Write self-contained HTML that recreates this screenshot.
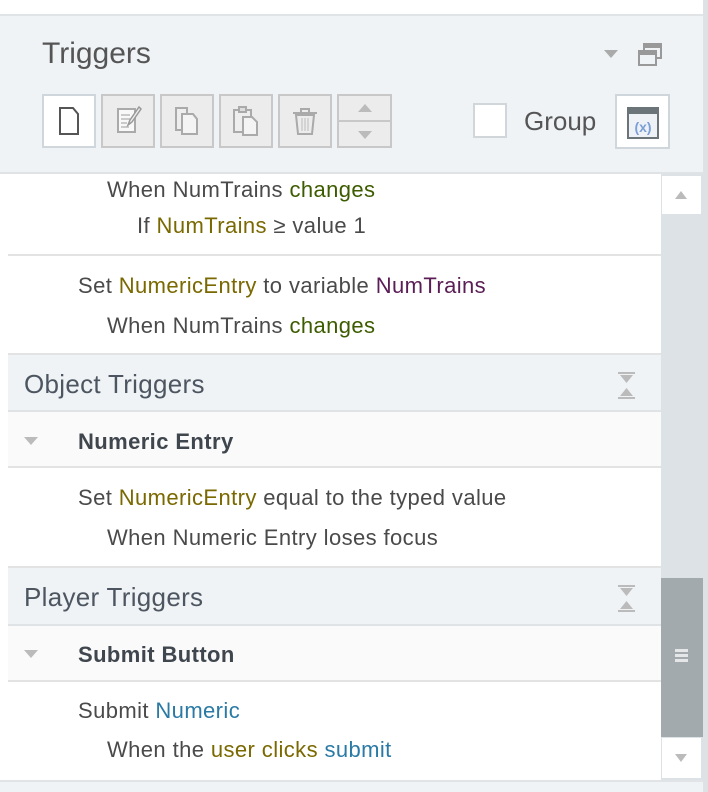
<!DOCTYPE html>
<html><head><meta charset="utf-8"><style>
*{margin:0;padding:0;box-sizing:border-box}
body{width:708px;height:792px;background:#fff;font-family:"Liberation Sans",sans-serif;position:relative;overflow:hidden;color:#4a4a4a}
.a{position:absolute}
.t{position:absolute;font-size:22px;white-space:nowrap;letter-spacing:0.4px}
.g{color:#7a6800}.gr{color:#3d5c00}.p{color:#5a1d55}.b{color:#2a7aa5}
.btn{position:absolute;top:94px;width:54px;height:54px;border:2px solid #c8c8c8;background:#ececec}
.hdr{position:absolute;left:8px;width:653px;background:#eff3f6;border-bottom:2px solid #dfe3e6}
.sub{position:absolute;left:8px;width:653px;background:#fafafa;border-bottom:2px solid #e3e3e3}
.line{position:absolute;left:8px;width:653px;height:2px;background:#e3e3e3}
.h{font-size:26px;color:#4d5660;letter-spacing:0.3px}
</style></head><body>
<div class="a" style="left:0;top:14px;width:708px;height:2px;background:#e1e4e7"></div>
<div class="a" style="left:0;top:16px;width:703px;height:156px;background:#eff3f6"></div>
<div class="a" style="left:703px;top:0;width:5px;height:792px;background:#dfe2e5"></div>
<div class="a" style="left:0;top:172px;width:703px;height:2px;background:#dfe3e6"></div>
<div class="t" style="left:42px;top:37px;font-size:30px;color:#555;letter-spacing:0">Triggers</div>
<div class="a" style="left:604px;top:50px;width:0;height:0;border-left:7px solid transparent;border-right:7px solid transparent;border-top:8px solid #aaa"></div>
<svg class="a" style="left:638px;top:42px" width="26" height="26"><rect x="6" y="2" width="17" height="14" fill="none" stroke="#999" stroke-width="2"/><rect x="6" y="2" width="17" height="4" fill="#999"/><rect x="1" y="9" width="17" height="14" fill="#eff3f6" stroke="#999" stroke-width="2"/><rect x="1" y="9" width="17" height="4" fill="#999"/></svg>
<div class="btn" style="left:42px;background:#fff;border-color:#cfd6dc"><svg width="50" height="50"><path d="M16 12h13l5 6v20h-18z" fill="none" stroke="#555" stroke-width="2"/></svg></div>
<div class="btn" style="left:101px"><svg width="50" height="50"><rect x="15" y="13" width="17" height="23" fill="#f8f8f8" stroke="#aaa" stroke-width="2"/><path d="M18 19h9M18 23h9M18 27h6M18 31h8" stroke="#bbb" stroke-width="1.5"/><path d="M36 11l-9 13-2 5 4-3 9-13z" fill="#eee" stroke="#999" stroke-width="1.5"/></svg></div>
<div class="btn" style="left:160px"><svg width="50" height="50"><path d="M14 12h11v22h-11z" fill="#eee" stroke="#aaa" stroke-width="2"/><path d="M20 18h11l4 5v15h-15z" fill="#f4f4f4" stroke="#aaa" stroke-width="2"/></svg></div>
<div class="btn" style="left:219px"><svg width="50" height="50"><rect x="13" y="14" width="17" height="22" fill="#eee" stroke="#aaa" stroke-width="2"/><rect x="18" y="11" width="7" height="5" fill="#ddd" stroke="#aaa" stroke-width="2"/><path d="M22 21h9l5 5v13h-14z" fill="#f4f4f4" stroke="#aaa" stroke-width="2"/></svg></div>
<div class="btn" style="left:278px"><svg width="50" height="50"><path d="M13 17h24M21 17v-4h8v4" fill="none" stroke="#aaa" stroke-width="2"/><path d="M16 19l2 19h14l2-19z" fill="none" stroke="#aaa" stroke-width="2"/><path d="M22 22v13M25 22v13M28 22v13" stroke="#ccc" stroke-width="1.5"/></svg></div>
<div class="btn" style="left:337px;width:55px"><div style="position:absolute;left:0;top:24px;width:51px;height:2px;background:#c8c8c8"></div><div class="a" style="left:19px;top:8px;border-left:7px solid transparent;border-right:7px solid transparent;border-bottom:8px solid #bbb"></div><div class="a" style="left:19px;top:35px;border-left:7px solid transparent;border-right:7px solid transparent;border-top:8px solid #bbb"></div></div>
<div class="a" style="left:473px;top:103px;width:34px;height:35px;background:#fff;border:2px solid #d0d6da"></div>
<div class="t" style="left:524px;top:106px;font-size:26px;color:#555;letter-spacing:0">Group</div>
<div class="a" style="left:615px;top:94px;width:55px;height:55px;background:#fff;border:2px solid #cfd6dc"><svg width="51" height="51"><rect x="11" y="12" width="30" height="30" fill="#eef2f7" stroke="#6b7478" stroke-width="2"/><rect x="11" y="12" width="30" height="6" fill="#6b7478"/><text x="26" y="36" font-family="Liberation Sans" font-size="14" font-weight="bold" fill="#7b9fd6" text-anchor="middle">(x)</text></svg></div>

<div class="a" style="left:661px;top:174px;width:42px;height:606px;background:#dde2e6"></div>
<div class="a" style="left:662px;top:176px;width:39px;height:38px;background:#fff"><div class="a" style="left:13px;top:15px;border-left:6px solid transparent;border-right:6px solid transparent;border-bottom:8px solid #bbb"></div></div>
<div class="a" style="left:661px;top:578px;width:42px;height:159px;background:#a3aaae"><div class="a" style="left:14px;top:71px;width:13px;height:3px;background:#e4e6e8;box-shadow:0 5px 0 #e4e6e8,0 10px 0 #e4e6e8"></div></div>
<div class="a" style="left:662px;top:738px;width:39px;height:40px;background:#fff"><div class="a" style="left:13px;top:16px;border-left:6px solid transparent;border-right:6px solid transparent;border-top:8px solid #bbb"></div></div>
<div class="a" style="left:0;top:780px;width:703px;height:12px;background:#eff3f6;border-top:2px solid #e1e4e7"></div>

<div class="t" style="left:107px;top:177px">When NumTrains <span class="gr">changes</span></div>
<div class="t" style="left:137px;top:213px">If <span class="g">NumTrains</span> ≥ value 1</div>
<div class="line" style="top:254px"></div>
<div class="t" style="left:78px;top:273px">Set <span class="g">NumericEntry</span> to variable <span class="p">NumTrains</span></div>
<div class="t" style="left:107px;top:313px">When NumTrains <span class="gr">changes</span></div>
<div class="hdr" style="top:353px;height:59px;border-top:2px solid #e3e3e3"></div>
<div class="t h" style="left:24px;top:369px">Object Triggers</div>
<svg class="a" style="left:617px;top:372px" width="19" height="27"><path d="M1 1h17" stroke="#bbb" stroke-width="2"/><path d="M3 3h13l-6.5 8z" fill="#bbb"/><path d="M3 24h13l-6.5-8z" fill="#bbb"/><path d="M1 26h17" stroke="#bbb" stroke-width="2"/></svg>
<div class="sub" style="top:412px;height:56px"></div>
<div class="a" style="left:24px;top:437px;border-left:7px solid transparent;border-right:7px solid transparent;border-top:8px solid #bbb"></div>
<div class="t" style="left:78px;top:429px;font-weight:bold;color:#3f464d">Numeric Entry</div>
<div class="t" style="left:78px;top:485px">Set <span class="g">NumericEntry</span> equal to the typed value</div>
<div class="t" style="left:107px;top:525px">When Numeric Entry loses focus</div>
<div class="hdr" style="top:566px;height:60px;border-top:2px solid #e3e3e3"></div>
<div class="t h" style="left:24px;top:582px">Player Triggers</div>
<svg class="a" style="left:617px;top:585px" width="19" height="27"><path d="M1 1h17" stroke="#bbb" stroke-width="2"/><path d="M3 3h13l-6.5 8z" fill="#bbb"/><path d="M3 24h13l-6.5-8z" fill="#bbb"/><path d="M1 26h17" stroke="#bbb" stroke-width="2"/></svg>
<div class="sub" style="top:626px;height:56px"></div>
<div class="a" style="left:24px;top:650px;border-left:7px solid transparent;border-right:7px solid transparent;border-top:8px solid #bbb"></div>
<div class="t" style="left:78px;top:642px;font-weight:bold;color:#3f464d">Submit Button</div>
<div class="t" style="left:78px;top:698px">Submit <span class="b">Numeric</span></div>
<div class="t" style="left:107px;top:737px">When the <span class="g">user clicks</span> <span class="b">submit</span></div>
</body></html>
